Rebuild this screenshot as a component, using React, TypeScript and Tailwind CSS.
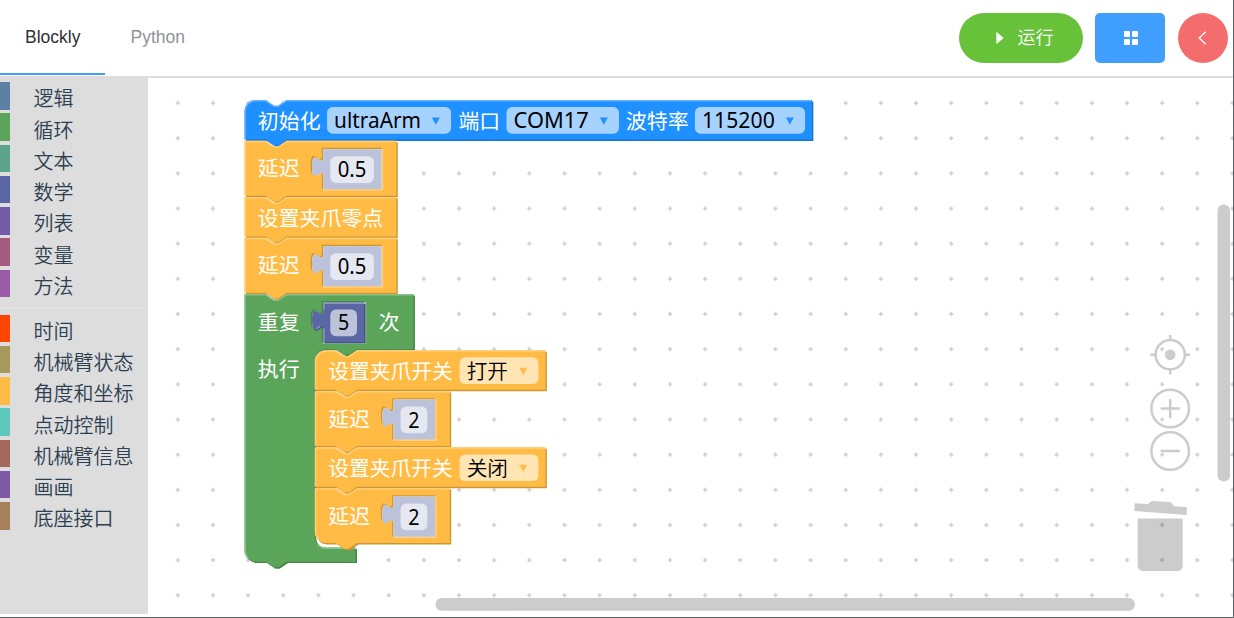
import type { ReactNode } from "react";

type Category = { name: string; color: string };

const baseCategories: Category[] = [
  { name: "逻辑", color: "bg-[#5b80a5]" },
  { name: "循环", color: "bg-[#5ba55b]" },
  { name: "文本", color: "bg-[#5ba58c]" },
  { name: "数学", color: "bg-[#5b67a5]" },
  { name: "列表", color: "bg-[#745ba5]" },
  { name: "变量", color: "bg-[#a55b80]" },
  { name: "方法", color: "bg-[#995ba5]" },
];

const robotCategories: Category[] = [
  { name: "时间", color: "bg-[#ff4500]" },
  { name: "机械臂状态", color: "bg-[#a5995b]" },
  { name: "角度和坐标", color: "bg-[#ffbb44]" },
  { name: "点动控制", color: "bg-[#5cc9bc]" },
  { name: "机械臂信息", color: "bg-[#a5675b]" },
  { name: "画画", color: "bg-[#805ba5]" },
  { name: "底座接口", color: "bg-[#a5805b]" },
];

const BLUE = { main: "#1e90ff", dark: "#1873cc", light: "#62b1ff" };
const ORANGE = { main: "#ffbb44", dark: "#cc9636", light: "#ffcf7c" };
const GREEN = { main: "#5ba55b", dark: "#498449", light: "#8cc08c" };
const INDIGO = { main: "#5b67a5", dark: "#495284", light: "#8c95c0" };
type Palette = typeof BLUE;

const UNIT = 1.40625;
const NOTCH = "H 15 l 6,4 3,0 6,-4";
const TAB = "v 5 c 0,10 -8,-8 -8,7.5 s 8,-2.5 8,7.5";

function Shape({ d, light, c }: { d: string; light: string; c: Palette }) {
  return (
    <>
      <path d={d} transform="translate(1,1)" fill={c.dark} fillRule="evenodd" />
      <path d={d} fill={c.main} fillRule="evenodd" />
      <path d={light} fill="none" stroke={c.light} strokeWidth="1" />
    </>
  );
}

function socket(x: number, w: number) {
  return `M ${x},5 ${TAB} V 34.5 h ${w + 0.6} V 5 z`;
}

function socketLight(x: number, w: number) {
  return `M ${x + w + 1.1},5.5 V 35 H ${x + 0.5} M ${x - 5.5},24.8 l 3.5,-2`;
}

type BlockProps = {
  x: number;
  y: number;
  w: number;
  h: number;
  c: Palette;
  roundTop?: boolean;
  roundBottom?: boolean;
  hole?: { x: number; w: number };
  children: ReactNode;
};

function Block({ x, y, w, h: rowHeight, c, roundTop, roundBottom, hole, children }: BlockProps) {
  const h = rowHeight - 0.9;
  const start = roundTop ? "M 0,8 A 8,8 0 0,1 8,0" : "M 0,0";
  const end = roundBottom ? "H 8 A 8,8 0 0,1 0," + (h - 8) : "H 0";
  const outline = `${start} ${NOTCH} H ${w} V ${h} H 30 l -6,4 -3,0 -6,-4 ${end} z`;
  const lightStart = roundTop ? "M 0.5,8 A 7.5,7.5 0 0,1 8,0.5" : "M 0.5,0.5";
  const light =
    `M 0.5,${roundBottom ? h - 8 : h - 0.5} V ${roundTop ? 8 : 0.5} ${lightStart} H 14.8 l 6.2,4 3,0 6,-4 H ${w - 0.5}` +
    (roundBottom ? ` M 2.7,${h - 2.7} A 7.5,7.5 0 0,1 0.5,${h - 8}` : "");
  return (
    <g transform={`translate(${x},${y})`}>
      <Shape
        d={hole ? `${outline} ${socket(hole.x, hole.w)}` : outline}
        light={hole ? `${light} ${socketLight(hole.x, hole.w)}` : light}
        c={c}
      />
      {children}
    </g>
  );
}

function Label({ x, y, w, children, dark }: { x: number; y: number; w: number; children: string; dark?: boolean }) {
  return (
    <text
      x={x}
      y={y}
      textLength={w}
      lengthAdjust="spacingAndGlyphs"
      className={
        dark
          ? "fill-black text-[15.2px] font-normal [font-family:'Noto_Sans','Noto_Sans_CJK_SC',sans-serif]"
          : "fill-white text-[14.8px] font-normal [font-family:'Noto_Sans_CJK_SC',sans-serif]"
      }
    >
      {children}
    </text>
  );
}

function CjkValue({ children }: { children: string }) {
  return (
    <text
      x={5}
      y={15.4}
      textLength={29.4}
      lengthAdjust="spacingAndGlyphs"
      className="fill-black text-[14.8px] font-[350] [font-family:'Noto_Sans_CJK_SC',sans-serif]"
    >
      {children}
    </text>
  );
}

function Dropdown({ x, w, textWidth, color, children }: { x: number; w: number; textWidth?: number; color: string; children: string }) {
  return (
    <g transform={`translate(${x},5)`}>
      <rect width={w} height="19" rx="4" fill="#fff" fillOpacity="0.6" />
      {textWidth ? (
        <Label x={5} y={15} w={textWidth} dark>
          {children}
        </Label>
      ) : (
        <CjkValue>{children}</CjkValue>
      )}
      <path d={`M ${w - 13.6},7.4 h 5.6 l -2.8,5.2 z`} fill={color} />
    </g>
  );
}

function NumberBlock({ x, w, value, textWidth, real }: { x: number; w: number; value: string; textWidth: number; real?: boolean }) {
  const d = `M 0,0 ${TAB} V 28.5 H ${w - 0.5} V 0 z`;
  return (
    <g transform={`translate(${x},6)`}>
      {real ? (
        <Shape
          d={`M 0,0 ${TAB} V 28 H ${w - 1} V 0 z`}
          light={`M 0.5,27.5 V 18.5 M -5,18.8 l 3,-2 M 0.5,5 V 0.5 H ${w - 1.5}`}
          c={INDIGO}
        />
      ) : (
        <path d={d} fill="#bdc2db" />
      )}
      <rect x="5" y="5" width={w - 11} height="19" rx="4" fill="#fff" fillOpacity="0.6" />
      <Label x={5 + (w - 11 - textWidth) / 2} y={19.9} w={textWidth} dark>
        {value}
      </Label>
    </g>
  );
}

function Delay({ x, y, value, textWidth, w, roundBottom }: { x: number; y: number; value: string; textWidth: number; w: number; roundBottom?: boolean }) {
  return (
    <Block x={x} y={y} w={w + 66} h={40} c={ORANGE} hole={{ x: 55, w }} roundBottom={roundBottom}>
      <Label x={9.5} y={25.3} w={29.8}>
        延迟
      </Label>
      <NumberBlock x={56} w={w} value={value} textWidth={textWidth} />
    </Block>
  );
}

function Gripper({ y, state, roundTop }: { y: number; state: string; roundTop?: boolean }) {
  return (
    <Block x={50} y={y} w={164} h={29} c={ORANGE} roundTop={roundTop}>
      <Label x={9.5} y={20.7} w={88.6}>
        设置夹爪开关
      </Label>
      <Dropdown x={103} w={56} color="#ffbb44">
        {state}
      </Dropdown>
    </Block>
  );
}

function Repeat() {
  const d =
    `M 0,0 ${NOTCH} H 120.2 V 39.2 H 80 l -6,4 -3,0 -6,-4 h -7 a 8,8 0 0,0 -8,8 V 172.2 a 8,8 0 0,0 8,8 H 79 V 190.3 H 30 l -6,4 -3,0 -6,-4 H 8 A 8,8 0 0,1 0,182.3 z ` +
    socket(55, 30);
  const light =
    "M 0.5,182.3 V 0.5 H 14.8 l 6.2,4 3,0 6,-4 H 119.7 M 2.7,187.6 A 7.5,7.5 0 0,1 0.5,182.3 M 52,178.2 A 8.5,8.5 0 0,0 58,180.7 H 78.5 " +
    socketLight(55, 30);
  return (
    <g transform="translate(0,138)">
      <Shape d={d} light={light} c={GREEN} />
      <Label x={9.5} y={25.3} w={29.8}>
        重复
      </Label>
      <NumberBlock x={56} w={30} value="5" textWidth={8} real />
      <Label x={95.5} y={25.3} w={14.8}>
        次
      </Label>
      <Label x={9.5} y={59.3} w={29.8}>
        执行
      </Label>
    </g>
  );
}

function Workspace() {
  return (
    <svg className="block h-[536px] w-[1085px]" viewBox="148 78 1085 536">
      <defs>
        <pattern id="grid" x="160.2" y="85.5" width="35.156" height="35.156" patternUnits="userSpaceOnUse">
          <path d="M 15.5,17.58 h 4.2 M 17.6,15.48 v 4.2" stroke="#ccc" strokeWidth="1.41" />
        </pattern>
      </defs>
      <rect x="148" y="78" width="1085" height="536" fill="url(#grid)" />

      <g transform={`translate(244.5,100) scale(${UNIT})`}>
        <Block x={0} y={0} w={403.5} h={29} c={BLUE} roundTop>
          <Label x={9.5} y={20.3} w={44.6}>
            初始化
          </Label>
          <Dropdown x={58.7} w={88.2} textWidth={61.8} color="#1e90ff">
            ultraArm
          </Dropdown>
          <Label x={152.1} y={20.3} w={29.6}>
            端口
          </Label>
          <Dropdown x={186.3} w={80} textWidth={53.5} color="#1e90ff">
            COM17
          </Dropdown>
          <Label x={271.1} y={20.3} w={44.7}>
            波特率
          </Label>
          <Dropdown x={320.3} w={78.3} textWidth={51.8} color="#1e90ff">
            115200
          </Dropdown>
        </Block>
        <Delay x={0} y={29} value="0.5" textWidth={20.4} w={42} />
        <Block x={0} y={69} w={108} h={29} c={ORANGE}>
          <Label x={9.5} y={20.5} w={89}>
            设置夹爪零点
          </Label>
        </Block>
        <Delay x={0} y={98} value="0.5" textWidth={20.4} w={42} />
        <Repeat />
        <Gripper y={178} state="打开" roundTop />
        <Delay x={50} y={207} value="2" textWidth={8} w={30} />
        <Gripper y={247} state="关闭" />
        <Delay x={50} y={276} value="2" textWidth={8} w={30} roundBottom />
      </g>

      <g fill="none" stroke="#ccc" strokeWidth="2.5">
        <circle cx="1170.2" cy="354.7" r="14.6" />
        <path d="M1170.2 335v6M1170.2 368.5v6M1150.3 354.7h6M1184 354.7h6" />
        <circle cx="1170.2" cy="408.5" r="18.8" />
        <path d="M1161.7 408.5h17M1170.2 400v17" strokeLinecap="round" />
        <circle cx="1170.2" cy="451" r="18.8" />
        <path d="M1161.7 451h17" strokeLinecap="round" />
      </g>
      <circle cx="1170.2" cy="354.7" r="5.3" fill="#ccc" />
      <g fill="#000" fillOpacity="0.2">
        <path d="M1134.7 503.3l13.3.8 3.8-3.2 18.7 1.2 3.5 4.2 13 .9-.5 7.7-52.3-4z" />
        <path d="M1137.7 518.5h45V566a5 5 0 0 1-5 5h-35a5 5 0 0 1-5-5z" />
      </g>
      <rect x="1217.5" y="204.5" width="12.5" height="277" rx="6.2" fill="#ccc" />
      <rect x="435.5" y="598" width="699.5" height="12.8" rx="6.4" fill="#ccc" />
    </svg>
  );
}

function CategoryList({ items }: { items: Category[] }) {
  return (
    <ul className="flex flex-col gap-[3.75px]">
      {items.map((item) => (
        <li key={item.name} className="flex h-[27.5px] items-center">
          <span className={`h-full w-2.5 ${item.color}`} />
          <span className="ml-[23.5px] pt-[5px] text-[20px] leading-6 font-[350] whitespace-nowrap text-[#2c3e50] [font-family:'Noto_Sans_CJK_SC',sans-serif]">
            {item.name}
          </span>
        </li>
      ))}
    </ul>
  );
}

export default function App() {
  return (
    <div className="flex h-[618px] w-[1234px] flex-col overflow-hidden border-r border-b border-[#5a6466] bg-white [font-family:'Liberation_Sans','Noto_Sans_CJK_SC',sans-serif]">
      <header className="flex h-[78px] shrink-0 justify-between border-b-2 border-[#dcdcdc]">
        <nav className="flex h-[75px] text-[17.5px]">
          <button className="w-[105px] border-b-2 border-[#409eff] pt-0.5 pl-[25px] text-left text-[#303133]">Blockly</button>
          <button className="border-b-2 border-transparent pt-0.5 pl-[25.5px] text-[#909399]">Python</button>
        </nav>
        <div className="flex items-center pr-[5px]">
          <button className="flex h-[50px] w-[124px] items-center rounded-full bg-[#67c23a] pl-[36.5px] text-[18px] text-white">
            <svg className="h-[12px] w-2" viewBox="0 0 8 13" fill="currentColor">
              <path d="M0 1Q0 0 1 .6L7.3 6Q7.8 6.5 7.3 7L1 12.4Q0 13 0 12z" />
            </svg>
            <span className="ml-[14px] font-[350]">运行</span>
          </button>
          <button className="ml-3 grid h-[50px] w-[70px] place-items-center rounded-[5px] bg-[#409eff]">
            <span className="mb-px ml-px grid grid-cols-2 gap-0.5">
              <span className="size-1.5 rounded-[1px] bg-white" />
              <span className="size-1.5 rounded-[1px] bg-white" />
              <span className="size-1.5 rounded-[1px] bg-white" />
              <span className="size-1.5 rounded-[1px] bg-white" />
            </span>
          </button>
          <button className="ml-[13px] grid size-[50px] place-items-center rounded-full bg-[#f56c6c]">
            <svg className="mr-0.5 h-[14px] w-[9px]" viewBox="0 0 9 14" fill="none" stroke="#fff" strokeWidth="1.3">
              <path d="M7.7.7 1.2 7l6.5 6.3" />
            </svg>
          </button>
        </div>
      </header>
      <main className="flex">
        <aside className="h-[536px] w-[148px] shrink-0 bg-[#ddd] pt-1">
          <CategoryList items={baseCategories} />
          <div className="mt-[11px] mb-[5.5px] h-px bg-[#e6e6e6]" />
          <CategoryList items={robotCategories} />
        </aside>
        <Workspace />
      </main>
    </div>
  );
}
